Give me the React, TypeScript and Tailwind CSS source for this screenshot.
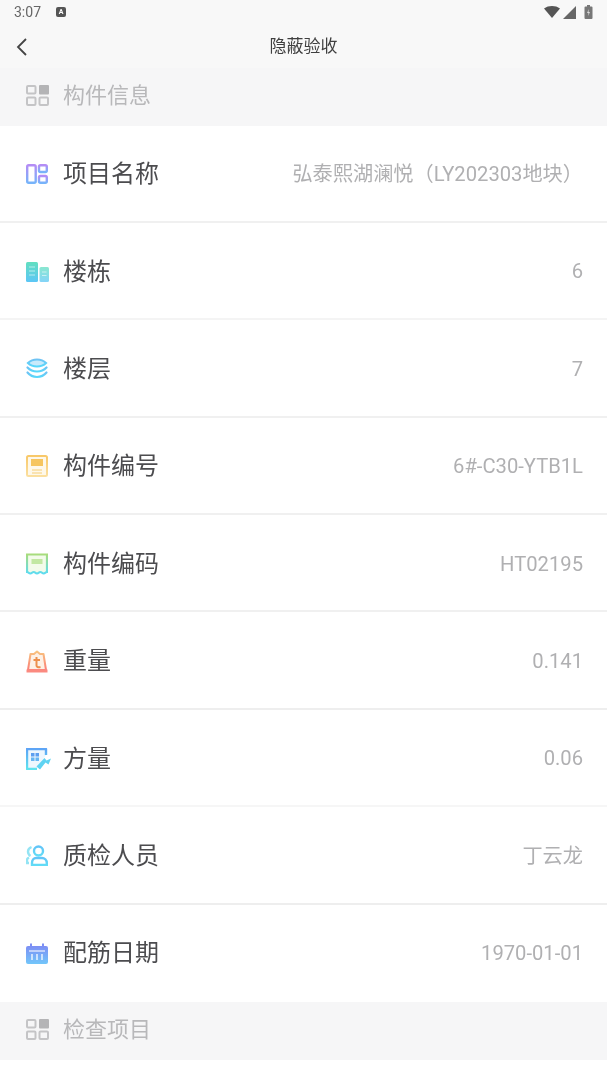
import React from 'react';

const FONT = "font-['Roboto','Noto_Sans_CJK_SC',sans-serif]";

function Grad({ id, from, to }: { id: string; from: string; to: string }) {
  return (
    <defs>
      <linearGradient id={id} x1="0" y1="0" x2="0" y2="1">
        <stop offset="0" stopColor={from} />
        <stop offset="1" stopColor={to} />
      </linearGradient>
    </defs>
  );
}

function SectionIcon() {
  return (
    <svg width="23" height="21" viewBox="0 0 23 21" fill="none" stroke="#c4c4c6" strokeWidth="2">
      <rect x="1" y="1" width="8.5" height="7.5" rx="1" />
      <rect x="13" y="0" width="10" height="9.5" rx="1" fill="#b4b4b6" stroke="none" />
      <rect x="1" y="12.5" width="8.5" height="7.5" rx="1" />
      <rect x="13.5" y="12.5" width="8.5" height="7.5" rx="1" />
    </svg>
  );
}

function ProjectIcon() {
  return (
    <svg width="22" height="20" viewBox="0 0 22 20" fill="none" stroke="url(#g1)" strokeWidth="2.4">
      <Grad id="g1" from="#b48cf5" to="#76b4fa" />
      <rect x="1.200" y="1.200" width="8.500" height="17.600" rx="1.500" />
      <rect x="13" y="1.200" width="7.800" height="6.800" rx="1.500" />
      <rect x="13" y="12" width="7.800" height="6.800" rx="1.500" />
    </svg>
  );
}

function BuildingIcon() {
  return (
    <svg width="23" height="20" viewBox="0 0 23 20">
      <Grad id="g2" from="#62dfc0" to="#5cc6f6" />
      <rect x="0" y="0" width="12" height="20" rx="1.500" fill="url(#g2)" />
      <rect x="13.500" y="5" width="9.500" height="15" rx="1.500" fill="url(#g2)" opacity="0.75" />
      <path d="M3 5h6M3 9h6M3 13h6M16 10h4.500M16 13.500h4.500" stroke="#fff" strokeOpacity="0.55" strokeWidth="1.200" />
    </svg>
  );
}

function LayersIcon() {
  return (
    <svg width="22" height="21" viewBox="0 0 22 21" fill="none" stroke="url(#g3)" strokeWidth="2.200" strokeLinecap="round">
      <Grad id="g3" from="#6fc3f4" to="#58d8fb" />
      <path d="M2 5C4.500 2.500 8 1.500 11 1.500S17.500 2.500 20 5C17.500 7.500 14 8.500 11 8.500S4.500 7.500 2 5Z" fill="#a4dcf9" fillOpacity="0.6" />
      <path d="M1.500 9.500C4 12.200 8 13.500 11 13.500S18 12.200 20.500 9.500" />
      <path d="M1.500 14.500C4 17.500 8 19 11 19S18 17.500 20.500 14.500" />
    </svg>
  );
}

function ComponentNoIcon() {
  return (
    <svg width="22" height="22" viewBox="0 0 22 22" fill="none">
      <Grad id="g4" from="#f8c869" to="#fbdf9f" />
      <rect x="1" y="1" width="20" height="20" rx="1.500" stroke="url(#g4)" strokeWidth="2" fill="#fef8ea" />
      <rect x="5" y="4" width="12" height="7" fill="#f6c55f" />
      <path d="M6 15h10M6 18h10" stroke="#f9dc9d" strokeWidth="1.500" />
    </svg>
  );
}

function CodeIcon() {
  return (
    <svg width="22" height="22" viewBox="0 0 22 22" fill="none">
      <Grad id="g5" from="#a8dc7c" to="#5edcf0" />
      <path
        d="M1 1.500h20v17.500c-1.700 0-1.700 1.500-3.300 1.500s-1.700-1.500-3.400-1.500-1.600 1.500-3.300 1.500-1.600-1.500-3.300-1.500-1.700 1.500-3.400 1.500S2.700 19 1 19Z"
        stroke="url(#g5)"
        strokeWidth="2.200"
        fill="#f3fbea"
      />
      <rect x="5.500" y="6" width="11" height="5" fill="#c2e8a2" />
    </svg>
  );
}

function WeightIcon() {
  return (
    <svg width="22" height="23" viewBox="0 0 22 23" fill="none">
      <Grad id="g6" from="#f8c27e" to="#fb7f78" />
      <path d="M8 4 11 1.500 14 4h3.500l2.500 16H2L4.500 4Z" stroke="url(#g6)" strokeWidth="2" strokeLinejoin="round" fill="#fdf1e6" />
      <path d="M0.500 19.500h21v3h-21Z" fill="#fb8a80" />
      <path d="M10.500 7v8.500c0 1.500 1.500 2 4 1.500M7.500 10h6.500" stroke="#ec8f4c" strokeWidth="2" />
    </svg>
  );
}

function VolumeIcon() {
  return (
    <svg width="25" height="22" viewBox="0 0 25 22" fill="none">
      <Grad id="g7" from="#5da4f6" to="#5fe3ee" />
      <path d="M20 7V1H1v20h10" stroke="url(#g7)" strokeWidth="2.400" strokeLinejoin="round" fill="#eef7fe" />
      <rect x="5" y="5" width="3.500" height="3.500" fill="#5d9ff0" />
      <rect x="9.500" y="5" width="3.500" height="3.500" fill="#5d9ff0" />
      <rect x="5" y="9.500" width="3.500" height="3.500" fill="#67b6f2" />
      <rect x="9.500" y="9.500" width="3.500" height="3.500" fill="#67b6f2" />
      <path d="M10.500 18.500 18.500 10 20.500 12.500 25 10.500 22.500 16.500 19.500 14.500 14 21.500Z" fill="#5fd3f2" />
    </svg>
  );
}

function PersonIcon() {
  return (
    <svg width="22" height="21" viewBox="0 0 22 21" fill="none" stroke="url(#g8)" strokeWidth="2.400">
      <Grad id="g8" from="#62c4f8" to="#62dcf6" />
      <circle cx="12.500" cy="6" r="4.500" />
      <path d="M6 20v-2c0-3 2-5 4-5h6c2.500 0 4.800 2 4.800 5v2Z" />
      <path d="M5.500 2C3 3 2 5 2 6.500S3 10 4.500 11M3 18H1v-3c0-1 1-2 2-2.500" stroke="#93e4f4" />
    </svg>
  );
}

function DateIcon() {
  return (
    <svg width="22" height="21" viewBox="0 0 22 21">
      <Grad id="g9" from="#7d8ff4" to="#72c6fa" />
      <path d="M2 3h18a2 2 0 0 1 2 2v14a2 2 0 0 1-2 2H2a2 2 0 0 1-2-2V5a2 2 0 0 1 2-2Z" fill="url(#g9)" />
      <path d="M5 0.500v4M17 0.500v4" stroke="#7d8ff4" strokeWidth="2" />
      <path d="M3 8h16" stroke="#fff" strokeOpacity="0.7" strokeWidth="1.500" />
      <path d="M6 11v6M11 11v6M16 11v6" stroke="#fff" strokeOpacity="0.7" strokeWidth="1.800" />
    </svg>
  );
}

function Section({ title }: { title: string }) {
  return (
    <div className="flex h-[57.5px] items-center gap-[14px] bg-[#f6f6f7] pb-[3px] pl-[26px]">
      <SectionIcon />
      <span className="text-[22px] text-[#b8b8ba]">{title}</span>
    </div>
  );
}

const rows = [
  { icon: <ProjectIcon />, label: '项目名称', value: '弘泰熙湖澜悦（LY202303地块）', border: 'border-[#f0f0f0]' },
  { icon: <BuildingIcon />, label: '楼栋', value: '6', border: 'border-[#f4f4f4]' },
  { icon: <LayersIcon />, label: '楼层', value: '7', border: 'border-[#f0f0f0]' },
  { icon: <ComponentNoIcon />, label: '构件编号', value: '6#-C30-YTB1L', border: 'border-[#f0f0f0]' },
  { icon: <CodeIcon />, label: '构件编码', value: 'HT02195', border: 'border-[#f0f0f0]' },
  { icon: <WeightIcon />, label: '重量', value: '0.141', border: 'border-[#eeeeee]' },
  { icon: <VolumeIcon />, label: '方量', value: '0.06', border: 'border-[#f6f6f6]' },
  { icon: <PersonIcon />, label: '质检人员', value: '丁云龙', border: 'border-[#eeeeee]' },
  { icon: <DateIcon />, label: '配筋日期', value: '1970-01-01', border: 'border-transparent' },
];

export default function App() {
  return (
    <div className={`h-[1080px] w-[607px] overflow-hidden bg-white blur-[0.5px] ${FONT}`}>
      <div className="h-[68px] bg-[#f8f8f8]">
        <div className="flex h-6 items-center pl-[14px] pr-[14px] text-[#666]">
          <span className="text-[14px]">3:07</span>
          <span className="ml-[15px] flex h-[10px] w-[10px] items-center justify-center rounded-[2px] bg-[#555] text-[7px] font-bold leading-none text-white">
            A
          </span>
          <div className="ml-auto flex items-center gap-[3px]">
            <svg width="16" height="12" viewBox="0 0 16 12" fill="#555">
              <path d="M0 2.500C4.500-.8 11.500-.8 16 2.500L8 12Z" />
            </svg>
            <svg width="13" height="13" viewBox="0 0 13 13" fill="#666">
              <path d="M13 0v13H0Z" />
            </svg>
            <svg width="9" height="14" viewBox="0 0 9 14" className="ml-[5px]">
              <path d="M1.500 1.500H3V0h3v1.500h1.500a1 1 0 0 1 1 1V13a1 1 0 0 1-1 1h-6a1 1 0 0 1-1-1V2.500a1 1 0 0 1 1-1Z" fill="#777" />
              <path d="M5 4 3 8h1.500L4 11l2-4H4.500Z" fill="#ddd" />
            </svg>
          </div>
        </div>
        <div className="relative flex h-11 items-center justify-center">
          <svg width="11" height="18" viewBox="0 0 11 18" fill="none" stroke="#444" strokeWidth="1.800" className="absolute left-4 top-[14px]">
            <path d="M10 1 2 9l8 8" />
          </svg>
          <span className="pt-[2px] text-[17px] text-[#3f3f3f]">隐蔽验收</span>
        </div>
      </div>
      <Section title="构件信息" />
      {rows.map((row) => (
        <div key={row.label} className={`flex h-[97.4px] items-center justify-between border-b-2 pl-[26px] pr-6 pt-[2px] ${row.border}`}>
          <div className="flex items-center">
            <span className="flex w-[37px] items-center">{row.icon}</span>
            <span className="text-[24px] text-[#4c4c4f]">{row.label}</span>
          </div>
          <span className="text-[20.2px] text-[#b0b0b2]">{row.value}</span>
        </div>
      ))}
      <Section title="检查项目" />
    </div>
  );
}
